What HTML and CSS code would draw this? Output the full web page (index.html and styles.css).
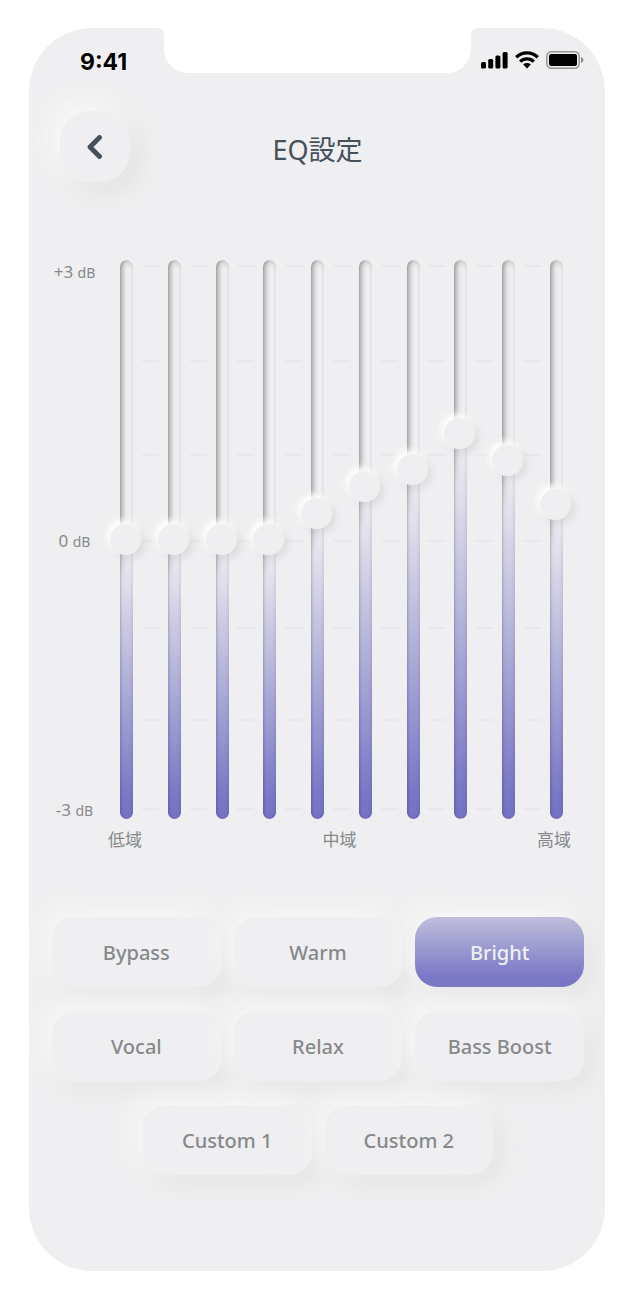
FILE: index.html
```html
<!DOCTYPE html>
<html lang="ja">
<head>
    <meta charset="UTF-8">
    <meta name="viewport" content="width=device-width, initial-scale=1.0">
    <title>EQ設定</title>
    <link rel="stylesheet" href="styles.css">
</head>
<body>

    <div class="phone">
        <!-- Status bar -->
        <div class="status-bar">
            <span class="time">9:41</span>
            <svg class="notch" viewBox="0 0 319 45" aria-hidden="true">
                <path d="M0 0 H319 Q313 1 313 7 V21 A24 24 0 0 1 289 45 H30 A24 24 0 0 1 6 21 V7 Q6 1 0 0 Z" fill="#fff"/>
            </svg>
            <div class="status-icons">
                <svg width="27" height="18" viewBox="0 0 27 18" aria-hidden="true">
                    <rect x="0" y="11" width="5" height="6.4" rx="1.5"/>
                    <rect x="7.2" y="8" width="5" height="9.4" rx="1.5"/>
                    <rect x="14.4" y="4.5" width="5" height="12.9" rx="1.5"/>
                    <rect x="21.6" y="1" width="5" height="16.4" rx="1.5"/>
                </svg>
                <svg width="24" height="18" viewBox="0 0 24 18" aria-hidden="true">
                    <g fill="none" stroke="#000" stroke-width="3.3">
                        <path d="M1.2 6.2 A15.6 15.6 0 0 1 22.8 6.2"/>
                        <path d="M5.2 10.6 A9.8 9.8 0 0 1 18.8 10.6"/>
                    </g>
                    <path d="M8.2 13.6 A5.6 5.6 0 0 1 15.8 13.6 L12 17.6 Z"/>
                </svg>
                <svg width="38" height="18" viewBox="0 0 38 18" aria-hidden="true">
                    <rect x="0.8" y="0.8" width="32.4" height="16.4" rx="4.4" fill="none" stroke="#000" stroke-opacity="0.38" stroke-width="1.5"/>
                    <rect x="3" y="3" width="28" height="12" rx="2"/>
                    <path d="M35 6 Q37.6 7 37.6 9 Q37.6 11 35 12 Z" fill-opacity="0.4"/>
                </svg>
            </div>
        </div>

        <!-- Title row -->
        <header class="header">
            <button class="back-btn" type="button" aria-label="戻る">
                <svg width="16" height="24" viewBox="0 0 16 24" aria-hidden="true">
                    <path d="M12.5 2.5 L3 12 L12.5 21.5" fill="none" stroke="#46505b" stroke-width="4.8" stroke-linecap="round" stroke-linejoin="round"/>
                </svg>
            </button>
            <h1 class="title">EQ設定</h1>
        </header>

        <!-- Equalizer -->
        <main class="equalizer">
            <div class="levels">
                <span>+3 <small>dB</small></span>
                <span>0 <small>dB</small></span>
                <span>-3 <small>dB</small></span>
            </div>
            <div class="bands" id="bands"></div>
            <div class="ranges">
                <span>低域</span>
                <span>中域</span>
                <span>高域</span>
            </div>
        </main>

        <!-- Presets -->
        <div class="presets" id="presets">
            <button class="preset" type="button">Bypass</button>
            <button class="preset" type="button">Warm</button>
            <button class="preset active" type="button">Bright</button>
            <button class="preset" type="button">Vocal</button>
            <button class="preset" type="button">Relax</button>
            <button class="preset" type="button">Bass Boost</button>
            <button class="preset custom" type="button">Custom 1</button>
            <button class="preset" type="button">Custom 2</button>
        </div>
    </div>

    <script src="script.js"></script>
</body>
</html>
```
FILE: styles.css
```css
* {
    box-sizing: border-box;
}

body {
    margin: 0;
    padding: 28px 30px 29px 29px;
    background-color: #fff;
    font-family: 'Noto Sans', 'Noto Sans CJK JP', sans-serif;
    color: #86898b;
}

.phone {
    padding-bottom: 96px;
    background-color: #efeff1;
    border-radius: 63px;
    overflow: hidden;
}

/* Status bar */
.status-bar {
    display: grid;
    grid-template-columns: 1fr 319px 1fr;
    height: 45px;
}

.time {
    padding: 19px 0 0 51px;
    font-family: Inter, sans-serif;
    font-size: 23px;
    font-weight: 700;
    line-height: 30px;
    color: #000;
}

.notch {
    display: block;
    width: 319px;
    height: 45px;
}

.status-icons {
    display: flex;
    justify-content: flex-end;
    gap: 7px;
    padding: 23px 21px 0 0;
}

.status-icons svg {
    flex: none;
}

/* Header */
.header {
    display: grid;
    grid-template-columns: 70px 1fr 70px;
    align-items: center;
    padding: 38px 30px 0 31px;
}

.back-btn {
    display: flex;
    align-items: center;
    justify-content: center;
    height: 71px;
    padding: 0;
    border: none;
    border-radius: 30px;
    background-color: #efeff1;
    box-shadow: -8px -8px 26px #fafafa, 8px 8px 26px #dfdfe0;
    cursor: pointer;
}

.title {
    margin: 0;
    padding-top: 6px;
    text-align: center;
    font-size: 27px;
    font-weight: 400;
    line-height: 40px;
    color: #46505b;
}

/* Equalizer */
.equalizer {
    display: grid;
    grid-template-columns: 91px 1fr;
    padding: 78px 42px 0 0;
}

.levels {
    display: flex;
    flex-direction: column;
    justify-content: space-between;
    align-items: center;
    margin: 1px 0 -3px;
    font-size: 17px;
    line-height: 22px;
}

.levels small {
    font-size: 14px;
}

.bands {
    display: flex;
    justify-content: space-between;
    height: 559px;
}

.band {
    -webkit-appearance: none;
    appearance: none;
    writing-mode: vertical-lr;
    direction: rtl;
    position: relative;
    width: 13px;
    height: 559px;
    margin: 0;
    border-radius: 7px;
    background-color: #efeff1;
    /* coloured fill over the grey groove */
    background-image:
        linear-gradient(rgba(239, 239, 241, 0), #e1e1ec 14%, #7a77c6 92%, #7572c2),
        linear-gradient(to right, #c2c2c4, #cfcfd1 3px, #e9e9eb 6px, #f0f0f2 9px);
    background-repeat: no-repeat;
    background-position: bottom;
    background-size: 100% calc((100% - 31px) * var(--level) + 15px), 100% 100%;
    box-shadow: inset 0 3px 4px rgba(0, 0, 0, 0.14), inset 1px 0 2px rgba(0, 0, 0, 0.12);
    cursor: pointer;
}

.band::-webkit-slider-thumb {
    -webkit-appearance: none;
    width: 31px;
    height: 31px;
    margin-left: -2px;
    border: none;
    border-radius: 50%;
    background-color: #efeff1;
    box-shadow: -3px -4px 7px #fff, 4px 4px 8px rgba(0, 0, 0, 0.08);
}

.ticks {
    display: grid;
    grid-template-rows: 95px 94px 86px 87px 92px 89px 2px;
    width: 17px;
    padding-top: 5px;
}

.ticks span {
    height: 2px;
    background-color: #e8e8ea;
}

.ranges {
    grid-column: 2;
    display: flex;
    justify-content: space-between;
    margin: 9px -8px 0 -12px;
    font-size: 17px;
    line-height: 24px;
}

/* Presets */
.presets {
    display: grid;
    grid-template-columns: repeat(6, 1fr);
    gap: 24px 13px;
    padding: 65px 21px 0 23px;
}

.preset {
    grid-column: span 2;
    height: 70px;
    padding: 0;
    border: none;
    border-radius: 22px;
    background-color: #efeff1;
    box-shadow: -8px -8px 22px #f7f7f7, 8px 8px 22px #e3e3e4;
    font-family: inherit;
    font-size: 20px;
    font-weight: 500;
    color: #86898b;
    cursor: pointer;
}

.preset.custom {
    grid-column: 2 / span 2;
}

.preset.active {
    background-image: linear-gradient(#bfbedb, #7b78c6 85%, #7572c2);
    color: #efeff1;
}
```
FILE: script.js
```js
// Gain of each band in dB, low to high
const gains = [0, 0, 0, 0, 0.3, 0.6, 0.8, 1.2, 0.9, 0.4];
const bands = document.getElementById('bands');

// Position of a gain on the track, 0 (bottom) to 1 (top)
function setLevel(input) {
    input.style.setProperty('--level', (Number(input.value) + 3) / 6);
}

gains.forEach((gain, i) => {
    if (i > 0) {
        const ticks = document.createElement('div');
        ticks.className = 'ticks';
        for (let n = 0; n < 7; n++) {
            ticks.appendChild(document.createElement('span'));
        }
        bands.appendChild(ticks);
    }

    const input = document.createElement('input');
    input.type = 'range';
    input.className = 'band';
    input.min = -3;
    input.max = 3;
    input.step = 0.1;
    input.value = gain;
    input.setAttribute('aria-label', 'Band ' + (i + 1));
    input.addEventListener('input', () => setLevel(input));
    setLevel(input);
    bands.appendChild(input);
});

// Highlight the chosen preset
document.getElementById('presets').addEventListener('click', (e) => {
    const preset = e.target.closest('.preset');
    if (!preset) {
        return;
    }
    document.querySelector('.preset.active').classList.remove('active');
    preset.classList.add('active');
});
```
